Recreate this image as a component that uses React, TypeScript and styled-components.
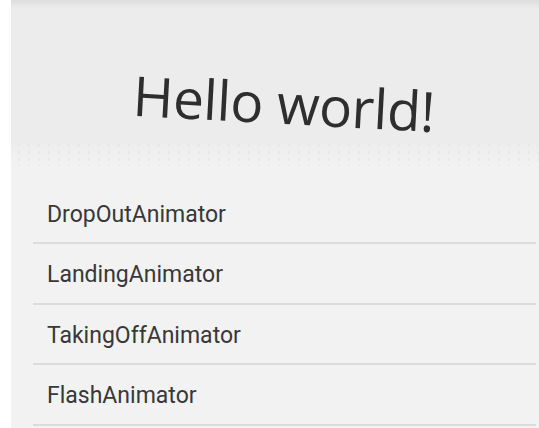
import React from "react";
import styled, { createGlobalStyle } from "styled-components";

const Global = createGlobalStyle`
  html, body { margin: 0; padding: 0; background: #ffffff; }
  body { font-family: Roboto, "Noto Sans", sans-serif; }
`;

const Screen = styled.div`
  margin-left: 11px;
  width: 528px;
  height: 428px;
  background: #f2f2f2;
  display: flex;
  flex-direction: column;
  overflow: hidden;
`;

const StatusShadow = styled.div`
  height: 8px;
  flex: none;
  background: linear-gradient(#dddddd, #e6e6e6 60%, #eaeaea);
`;

const Header = styled.div`
  height: 132px;
  flex: none;
  background: #ececec;
  display: flex;
  align-items: center;
  justify-content: center;
  padding-top: 56px;
  box-sizing: border-box;
`;

const Fade = styled.div`
  height: 26px;
  flex: none;
  background-color: #efefef;
  background-image:
    radial-gradient(circle, rgba(228, 228, 228, 0.7) 1px, transparent 1.6px),
    linear-gradient(#ececec, #f2f2f2);
  background-size: 10px 7px, 100% 100%;
  background-position: 3px 2px, 0 0;
`;

const Title = styled.h1`
  margin: 0 0 0 18px;
  font-family: "Open Sans", "DejaVu Sans", sans-serif;
  font-weight: 400;
  font-size: 55px;
  line-height: 1;
  color: #2e2e2e;
  letter-spacing: -0.4px;
  transform: rotate(3.1deg);
  transform-origin: center;
`;

const List = styled.ul`
  list-style: none;
  margin: 17.5px 3px 0 22px;
  padding: 0;
`;

const Row = styled.li`
  height: 60.5px;
  box-sizing: border-box;
  border-bottom: 2px solid #dcdcdc;
  display: flex;
  align-items: center;
  padding-left: 14px;
  padding-top: 3px;
  font-family: Roboto, "Noto Sans", sans-serif;
  font-size: 23px;
  color: #383838;
`;

const items = ["DropOutAnimator", "LandingAnimator", "TakingOffAnimator", "FlashAnimator"];

export default function App() {
  return (
    <>
      <Global />
      <Screen>
        <StatusShadow />
        <Header>
          <Title>Hello world!</Title>
        </Header>
        <Fade />
        <List>
          {items.map((t) => (
            <Row key={t}>{t}</Row>
          ))}
        </List>
      </Screen>
    </>
  );
}
